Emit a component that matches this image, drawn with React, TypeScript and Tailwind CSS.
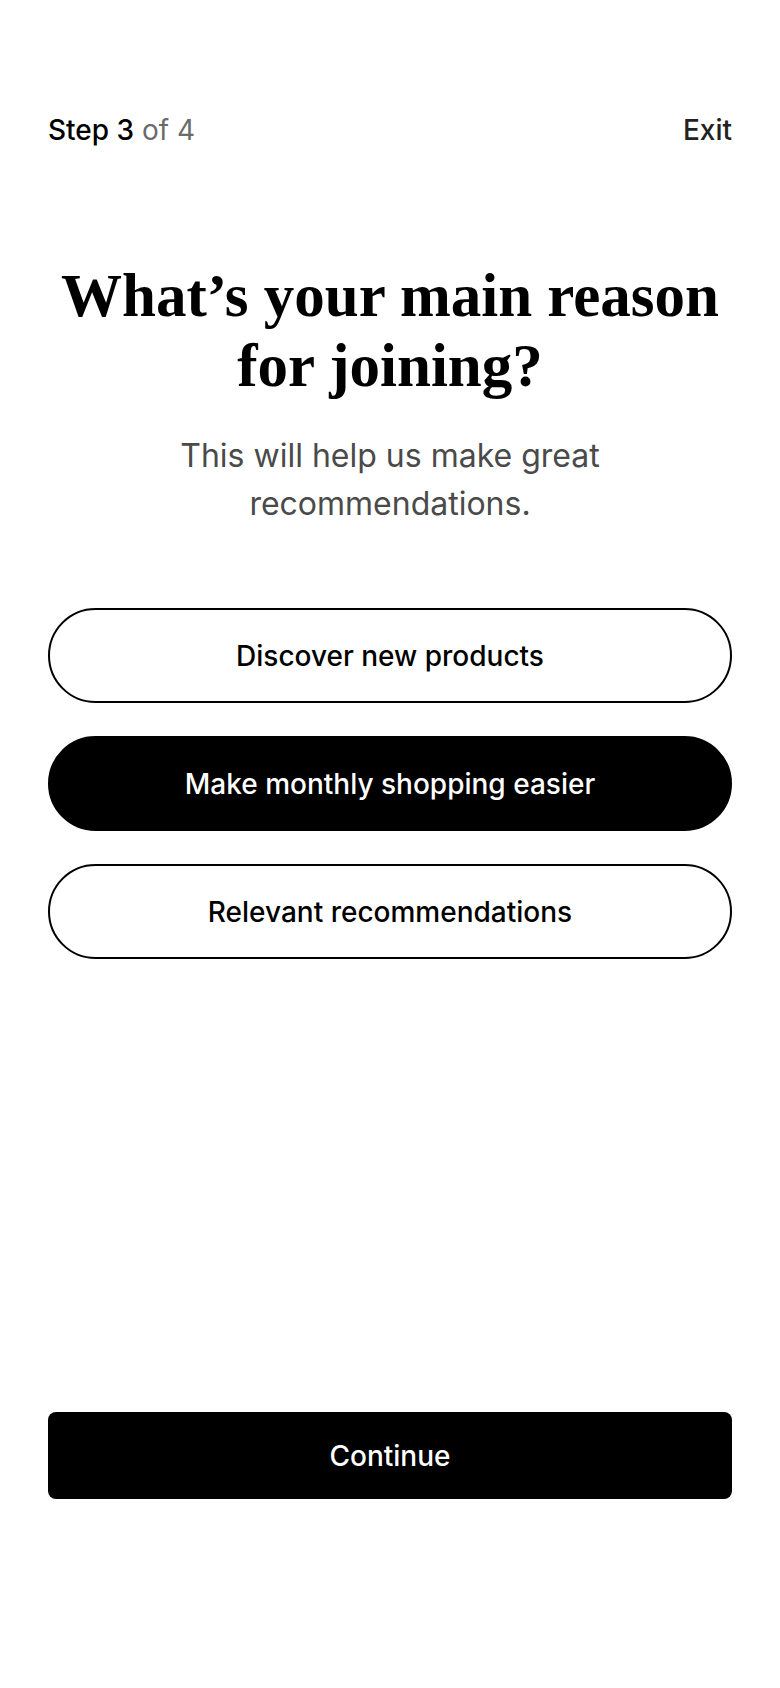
import { useState } from "react";

const OPTIONS = [
  "Discover new products",
  "Make monthly shopping easier",
  "Relevant recommendations",
];

export default function App() {
  const [selected, setSelected] = useState(1);

  return (
    <div className="flex min-h-[1688px] w-full flex-col bg-white px-12 font-['Inter',sans-serif] text-black">
      {/* header */}
      <div className="flex items-center justify-between pt-[112px] text-[28px] leading-9">
        <p>
          <span className="font-medium text-black">Step 3</span>{" "}
          <span className="text-[#6b6b6b]">of 4</span>
        </p>
        <button type="button" className="font-medium text-[#222]">
          Exit
        </button>
      </div>

      <h1 className="-mx-6 mt-[113px] text-center font-['Liberation_Serif',serif] text-[61px] font-bold leading-[70px] whitespace-nowrap">
        What’s your main reason
        <br />
        for joining?
      </h1>

      <p className="mx-auto mt-[31px] max-w-[480px] text-center text-[32px] leading-[48px] text-[#4a4a4a]">
        This will help us make great recommendations.
      </p>

      <ul className="mt-[80px] flex flex-col gap-[33px]">
        {OPTIONS.map((opt, i) => {
          const active = i === selected;
          return (
            <li key={opt}>
              <button
                type="button"
                onClick={() => setSelected(i)}
                className={
                  active
                    ? "flex h-[95px] w-full items-center justify-center rounded-full border-2 border-black bg-black text-[28px] font-medium text-white"
                    : "flex h-[95px] w-full items-center justify-center rounded-full border-2 border-black bg-white text-[28px] font-medium text-black"
                }
              >
                {opt}
              </button>
            </li>
          );
        })}
      </ul>

      <div className="flex-1" />

      <button
        type="button"
        className="mb-[189px] flex h-[87px] w-full items-center justify-center rounded-lg bg-black text-[28px] font-medium text-white"
      >
        Continue
      </button>
    </div>
  );
}
